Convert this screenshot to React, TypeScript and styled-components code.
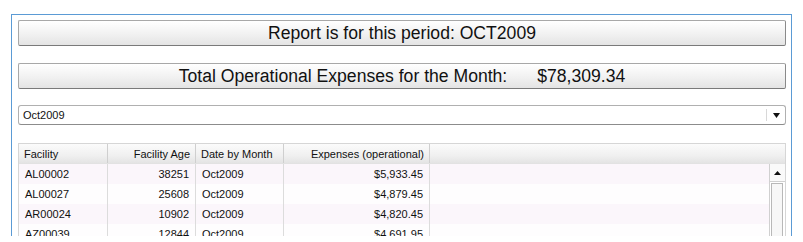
import styled, { createGlobalStyle } from 'styled-components';

const GlobalStyle = createGlobalStyle`
	html, body {
		margin: 0;
		padding: 0;
		background: #ffffff;
		overflow: hidden;
	}
	body {
		font-family: 'Liberation Sans', Arial, sans-serif;
		color: #1a1a1a;
	}
`;

type Row = { facility: string; age: string; date: string; expenses: string };

const rows: Row[] = [
	{ facility: 'AL00002', age: '38251', date: 'Oct2009', expenses: '$5,933.45' },
	{ facility: 'AL00027', age: '25608', date: 'Oct2009', expenses: '$4,879.45' },
	{ facility: 'AR00024', age: '10902', date: 'Oct2009', expenses: '$4,820.45' },
	{ facility: 'AZ00039', age: '12844', date: 'Oct2009', expenses: '$4,691.95' },
];

const App = () => {
	return (
		<>
			<GlobalStyle />
			<Panel>
				<TitleBar $gap={17}>Report is for this period: OCT2009</TitleBar>
				<TitleBar $gap={16}>
					Total Operational Expenses for the Month:
					<Amount>$78,309.34</Amount>
				</TitleBar>
				<Select>
					<SelectValue>Oct2009</SelectValue>
					<SelectArrow>
						<svg width="7" height="5" viewBox="0 0 7 5">
							<path d="M0 0 H7 L3.5 5 Z" fill="#111" />
						</svg>
					</SelectArrow>
				</Select>
				<Grid>
					<HeaderRow>
						<HeadCell $width={89}>Facility</HeadCell>
						<HeadCell $width={88} $right>
							Facility Age
						</HeadCell>
						<HeadCell $width={88}>Date by Month</HeadCell>
						<HeadCell $width={146} $right>
							Expenses (operational)
						</HeadCell>
						<HeadFiller />
					</HeaderRow>
					<Body>
						<Rows>
							{rows.map((r, i) => (
								<DataRow key={r.facility} $shaded={i % 2 === 0}>
									<Cell $width={89}>{r.facility}</Cell>
									<Cell $width={88} $right>
										{r.age}
									</Cell>
									<Cell $width={88}>{r.date}</Cell>
									<Cell $width={146} $right>
										{r.expenses}
									</Cell>
								</DataRow>
							))}
						</Rows>
						<Scrollbar>
							<ScrollButton>
								<svg width="7" height="4" viewBox="0 0 7 4">
									<path d="M0 4 H7 L3.5 0 Z" fill="#111" />
								</svg>
							</ScrollButton>
							<ScrollTrack />
						</Scrollbar>
					</Body>
				</Grid>
			</Panel>
		</>
	);
};
export default App;

const Panel = styled.div`
	box-sizing: border-box;
	margin: 14px 0 0 11px;
	width: 781px;
	height: 222px;
	border: 1px solid #5b9bd5;
	border-bottom: none;
	padding: 5px 5px 0 6px;
	overflow: hidden;
	display: flex;
	flex-direction: column;

	& > * {
		flex: none;
	}
`;

const TitleBar = styled.div<{ $gap: number }>`
	box-sizing: border-box;
	height: 26px;
	border: 1px solid #a8a8a8;
	border-bottom-color: #7a7a7a;
	border-right-color: #8a8a8a;
	border-radius: 2px;
	background: linear-gradient(#ffffff, #f1f1f1 55%, #e4e4e4);
	display: flex;
	align-items: center;
	justify-content: center;
	font-size: 17.6px;
	color: #111;
	margin-bottom: ${(p) => p.$gap}px;
`;

const Amount = styled.span`
	margin-left: 30px;
`;

const Select = styled.div`
	box-sizing: border-box;
	height: 20px;
	border: 1px solid #b0b0b0;
	border-bottom-color: #8c8c8c;
	border-radius: 3px;
	background: #ffffff;
	display: flex;
	align-items: center;
	margin-bottom: 18px;
`;

const SelectValue = styled.div`
	flex: 1;
	padding-left: 4px;
	font-size: 11px;
	color: #111;
`;

const SelectArrow = styled.div`
	width: 18px;
	height: 12px;
	border-left: 1px solid #d8d8d8;
	display: flex;
	align-items: center;
	justify-content: center;
`;

const Grid = styled.div`
	box-sizing: border-box;
	border: 1px solid #d6d6d6;
	border-bottom: none;
	display: flex;
	flex-direction: column;
	font-size: 11px;
	color: #111;
`;

const HeaderRow = styled.div`
	height: 19px;
	display: flex;
	background: linear-gradient(#fbfbfb, #f0f0f0 60%, #e4e4e4);
	border-bottom: 1px solid #e2e2e2;
`;

const HeadCell = styled.div<{ $width: number; $right?: boolean }>`
	box-sizing: border-box;
	width: ${(p) => p.$width}px;
	flex: none;
	padding: 0 5px;
	display: flex;
	align-items: center;
	justify-content: ${(p) => (p.$right ? 'flex-end' : 'flex-start')};
	border-right: 1px solid #cfcfcf;
	white-space: nowrap;
`;

const HeadFiller = styled.div`
	flex: 1;
`;

const Body = styled.div`
	display: flex;
	height: 80px;
`;

const Rows = styled.div`
	flex: 1;
	display: flex;
	flex-direction: column;
`;

const DataRow = styled.div<{ $shaded: boolean }>`
	height: 20px;
	flex: none;
	display: flex;
	background: ${(p) => (p.$shaded ? '#fbf6fb' : '#fefdfe')};
`;

const Cell = styled.div<{ $width: number; $right?: boolean }>`
	box-sizing: border-box;
	width: ${(p) => p.$width}px;
	flex: none;
	padding: 0 6px;
	display: flex;
	align-items: center;
	justify-content: ${(p) => (p.$right ? 'flex-end' : 'flex-start')};
	border-right: 1px solid #dcdcdc;
	white-space: nowrap;
`;

const Scrollbar = styled.div`
	width: 15px;
	flex: none;
	display: flex;
	flex-direction: column;
	background: #ffffff;
	border-left: 1px solid #d0d0d0;
`;

const ScrollButton = styled.div`
	height: 17px;
	display: flex;
	align-items: center;
	justify-content: center;
	border-bottom: 1px solid #d0d0d0;
	background: #fafafa;
`;

const ScrollTrack = styled.div`
	flex: 1;
	margin: 1px 2px 0 1px;
	border: 1px solid #b8b8b8;
	border-bottom: none;
	background: #f7f7f7;
`;
